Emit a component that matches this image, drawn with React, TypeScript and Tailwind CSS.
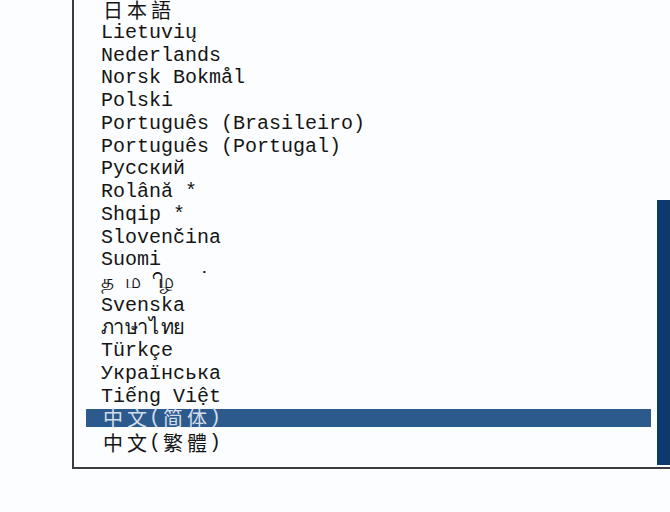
import React from "react";

// the language list of a text-mode installer, one entry per row
const languages = [
  "日本語",
  "Lietuvių",
  "Nederlands",
  "Norsk Bokmål",
  "Polski",
  "Português (Brasileiro)",
  "Português (Portugal)",
  "Русский",
  "Rolână *",
  "Shqip *",
  "Slovenčina",
  "Suomi",
  "TAMIL",
  "Svenska",
  "ภาษาไทย",
  "Türkçe",
  "Українська",
  "Tiếng Việt",
  "中文(简体)",
  "中文(繁體)",
];

const selected = "中文(简体)";

function isWide(ch: string) {
  const c = ch.codePointAt(0) || 0;
  return c >= 0x2e80 && c <= 0xffdc;
}

// console font: every glyph takes one 12px cell, CJK takes two
function Cells({ text }: { text: string }) {
  return (
    <>
      {Array.from(text).map((ch, i) =>
        isWide(ch) ? (
          <span
            key={i}
            className="inline-block w-[24px] text-center text-[20px] font-['Noto_Sans_CJK_SC',sans-serif]"
          >
            {ch}
          </span>
        ) : (
          <span key={i} className="inline-block w-[12px] whitespace-pre">
            {ch}
          </span>
        )
      )}
    </>
  );
}

// tamil is drawn broken by the console font, glyphs spread over cells
function Tamil() {
  return (
    <span className="relative inline-block h-full w-[120px]">
      <span className="absolute left-0 top-0">த</span>
      <span className="absolute left-[24px] top-0">ம</span>
      <span className="absolute left-[44px] top-0">{"\u00a0ி"}</span>
      <span className="absolute left-[57px] top-0">ழ</span>
      <span className="absolute left-[102px] top-[-3px]">{"\u00a0்"}</span>
    </span>
  );
}

export default function App() {
  return (
    <div className="h-[512px] w-[670px] overflow-hidden bg-[#fcfdff] font-['Liberation_Mono',monospace] text-[20px] text-[#151515]">
      <div className="ml-[72px] flex h-[469px] border-b-2 border-l-2 border-[#3c3c3c]">
        <div className="mt-[-1px] flex flex-1 flex-col pl-[12px] pr-[6px]">
          {languages.map((lang) =>
            lang === selected ? (
              <div key={lang} className="flex h-[22.78px] shrink-0 items-start">
                <div className="flex h-[18px] w-full items-center bg-[#2d5a8c] pl-[15px] leading-[18px] text-[#d3deeb]">
                  <Cells text={lang} />
                </div>
              </div>
            ) : (
              <div key={lang} className="flex h-[22.78px] shrink-0 items-center pl-[15px] leading-[22.78px]">
                {lang === "TAMIL" ? <Tamil /> : <Cells text={lang} />}
              </div>
            )
          )}
        </div>
        <div className="flex w-[13px] flex-col pt-[200px] pb-[2px]">
          <div className="flex-1 bg-[#0b3a6d]" />
        </div>
      </div>
    </div>
  );
}
